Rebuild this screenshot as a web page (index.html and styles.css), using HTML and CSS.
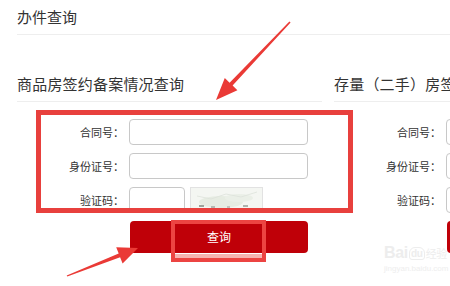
FILE: index.html
```html
<!DOCTYPE html>
<html lang="zh-CN">
<head>
<meta charset="utf-8">
<title>办件查询</title>
<link rel="stylesheet" href="styles.css">
</head>
<body>
<div class="page">
  <div class="head">办件查询</div>
  <div class="columns">
    <div class="col">
      <div class="col-title">商品房签约备案情况查询</div>
      <div class="form">
        <div class="row"><span class="label">合同号：</span><span class="input"></span></div>
        <div class="row"><span class="label">身份证号：</span><span class="input"></span></div>
        <div class="row"><span class="label">验证码：</span><span class="input small"></span>
          <span class="captcha">
            <svg width="71" height="24" viewBox="0 0 71 24">
              <rect x="0" y="0" width="71" height="24" fill="#f4f6f2"/>
              <ellipse cx="30" cy="14" rx="22" ry="6" fill="#e6ece2"/>
              <ellipse cx="48" cy="10" rx="14" ry="4" fill="#eaefe7"/>
              <rect x="8" y="17" width="5" height="2" fill="#9da39b"/>
              <rect x="20" y="18" width="4" height="2" fill="#b4b8b2"/>
              <rect x="36" y="18" width="3" height="2" fill="#c0c3be"/>
              <rect x="52" y="17" width="5" height="2" fill="#aeb2ac"/>
              <path d="M6 8 L20 11 L35 6 L50 9 L66 4" stroke="#dde2da" stroke-width="0.8" fill="none"/>
            </svg>
          </span>
        </div>
        <div class="btn">查询</div>
      </div>
    </div>
    <div class="col">
      <div class="col-title">存量（二手）房签约备案情况查询</div>
      <div class="form">
        <div class="row"><span class="label">合同号：</span><span class="input"></span></div>
        <div class="row"><span class="label">身份证号：</span><span class="input"></span></div>
        <div class="row"><span class="label">验证码：</span><span class="input small"></span></div>
        <div class="btn"></div>
      </div>
    </div>
  </div>
</div>

<div class="mark-box"></div>
<div class="mark-btn"></div>

<svg class="arrows" width="450" height="286" viewBox="0 0 450 286">
  <polygon fill="#ea3a36" points="290.6,22.5 232.6,85.4 237.4,90.2 216,100 224.8,78 229.6,82.7 289.4,21.5"/>
  <polygon fill="#ea3a36" points="67.3,276.6 120.1,257.2 122.6,263.4 138,248 116.2,247.3 118.7,253.4 66.7,275.4"/>
</svg>

<div class="watermark">
  <div class="wm-logo">Bai<span class="du">du</span><span class="wm-cn">经验</span></div>
  <div class="wm-url">jingyan.baidu.com</div>
</div>
</body>
</html>
```

FILE: styles.css
```css
* { box-sizing: border-box; }
html, body { margin: 0; padding: 0; background: #fff; }
body {
  width: 450px;
  height: 286px;
  overflow: hidden;
  position: relative;
  font-family: "Noto Sans CJK SC", "Noto Sans", sans-serif;
  color: #333;
}
.page {
  padding-left: 17px;
}
.head {
  font-size: 15px;
  line-height: 20px;
  padding-top: 7px;
  padding-bottom: 7px;
  border-bottom: 1px solid #eeeeee;
  color: #333;
}
.columns {
  display: flex;
  gap: 12px;
  padding-top: 39px;
}
.col {
  flex: 0 0 305px;
  white-space: nowrap;
}
.col-title {
  font-size: 15px;
  line-height: 20px;
  padding-bottom: 7px;
  border-bottom: 1px solid #eeeeee;
  color: #333;
  letter-spacing: 0.2px;
}
.form {
  padding-top: 17px;
}
.row {
  display: flex;
  align-items: center;
  height: 26px;
  margin-bottom: 8px;
}
.label {
  width: 107px;
  text-align: right;
  font-size: 11px;
  color: #333;
  flex: 0 0 107px;
}
.input {
  display: block;
  margin-left: 5px;
  width: 179px;
  height: 26px;
  border: 1px solid #c8c8c8;
  border-radius: 4px;
  background: #fff;
  flex: 0 0 179px;
}
.input.small {
  width: 56px;
  flex: 0 0 56px;
}
.captcha {
  display: block;
  margin-left: 5px;
  width: 73px;
  height: 25px;
  border: 1px solid #e2e2e2;
  margin-top: -2px;
}
.captcha svg { display: block; }
.btn {
  margin-top: 1px;
  margin-left: 113px;
  width: 178px;
  height: 32px;
  border-radius: 4px;
  background: #bf0008;
  color: #fff;
  font-size: 12px;
  line-height: 32px;
  text-align: center;
}
.mark-box {
  position: absolute;
  left: 36px;
  top: 110px;
  width: 317px;
  height: 103px;
  border: 5px solid #e8403d;
}
.mark-btn {
  position: absolute;
  left: 171px;
  top: 220px;
  width: 95px;
  height: 42px;
  border: 4px solid #ec4442;
  box-shadow: inset 0 -4px 0 #f6b3b1;
}
.arrows {
  position: absolute;
  left: 0;
  top: 0;
}
.watermark {
  position: absolute;
  left: 384px;
  top: 243px;
  color: #ededed;
  white-space: nowrap;
}
.wm-logo {
  font-family: "Liberation Sans", Arial, sans-serif;
  font-size: 16px;
  line-height: 20px;
  font-weight: bold;
  letter-spacing: -0.3px;
}
.du {
  display: inline-block;
  border: 1px solid #ededed;
  border-radius: 6px 6px 3px 3px;
  font-size: 10px;
  line-height: 11px;
  padding: 0 1px;
  margin: 0 1px;
  vertical-align: 1px;
}
.wm-cn {
  font-family: "Noto Sans CJK SC", sans-serif;
  font-size: 11px;
  font-weight: normal;
}
.wm-url {
  font-family: "Liberation Sans", Arial, sans-serif;
  font-size: 8px;
  line-height: 12px;
  color: #eeeeee;
}
```
